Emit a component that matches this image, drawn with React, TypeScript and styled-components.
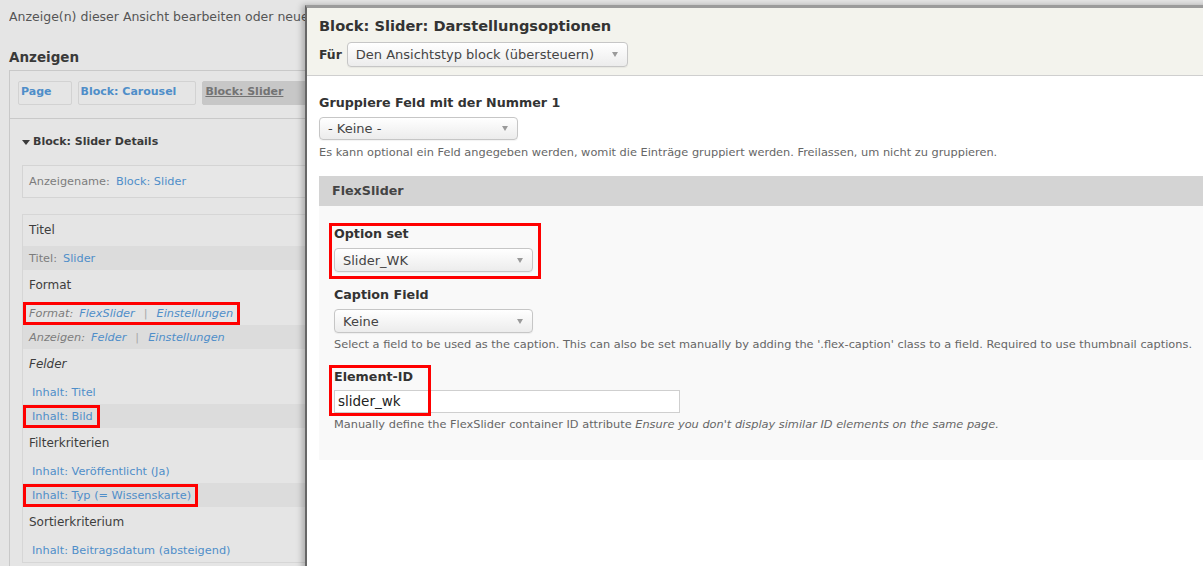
import React from 'react';
import styled, { createGlobalStyle, css } from 'styled-components';

const LINK = '#4f8ec9';

const GlobalStyle = createGlobalStyle`
  html, body {
    margin: 0;
    padding: 0;
  }
  body {
    font-family: "DejaVu Sans", Verdana, sans-serif;
    background: #e5e5e5;
    color: #333;
    overflow: hidden;
  }
`;

const Screen = styled.div`
  position: relative;
  width: 1203px;
  height: 566px;
  overflow: hidden;
  background: #e5e5e5;
`;

/* ---------- page behind the dialog ---------- */

const Page = styled.div`
  padding: 8px 0 0 9px;
`;

const Intro = styled.p`
  margin: 0;
  width: 296px;
  overflow: hidden;
  font-size: 12.5px;
  line-height: 18px;
  color: #555;
  white-space: nowrap;
`;

const SectionTitle = styled.h2`
  margin: 22px 0 4px;
  font-size: 13.5px;
  line-height: 18px;
  font-weight: bold;
  color: #3a3a3a;
`;

const DisplaysBox = styled.div`
  border: 1px solid #c9c9c9;
  border-right: none;
  height: 520px;
`;

const TabBar = styled.div`
  display: flex;
  gap: 6px;
  height: 48px;
  box-sizing: border-box;
  padding: 10px 0 0 8px;
  border-bottom: 1px solid #c9c9c9;
`;

const Tab = styled.span<{ $active?: boolean }>`
  box-sizing: border-box;
  height: 24px;
  padding: 2px 19px 0 2px;
  border: 1px solid #d2d2d2;
  border-radius: 2px;
  font-size: 11px;
  line-height: 16px;
  font-weight: bold;
  color: ${LINK};
  white-space: nowrap;
  ${({ $active }) => $active && css`
    background: #c7c7c7;
    border-color: #c7c7c7;
    color: #737373;
    text-decoration: underline;
    padding-right: 40px;
  `}
`;

const DisplayBody = styled.div`
  padding: 15px 0 0 12px;
`;

const DetailsTitle = styled.div`
  display: flex;
  align-items: center;
  gap: 3px;
  font-size: 11px;
  line-height: 16px;
  font-weight: bold;
  color: #3a3a3a;
`;

const Triangle = styled.span`
  width: 0;
  height: 0;
  border-left: 4.5px solid transparent;
  border-right: 4.5px solid transparent;
  border-top: 5px solid #3a3a3a;
`;

const NameBox = styled.div`
  margin-top: 15px;
  height: 33px;
  box-sizing: border-box;
  border: 1px solid #d4d4d4;
  border-right: none;
  background: #e7e7e7;
  padding: 0 6px;
  font-size: 11.3px;
  line-height: 31px;
`;

const ColumnBox = styled.div`
  margin-top: 16px;
  border: 1px solid #d6d6d6;
  border-right: none;
`;

const HeadRow = styled.div<{ $italic?: boolean }>`
  height: 31px;
  padding-left: 6px;
  font-size: 12px;
  line-height: 31px;
  color: #3d3d3d;
  font-style: ${({ $italic }) => ($italic ? 'italic' : 'normal')};
`;

const ItemRow = styled.div<{ $shade?: boolean; $italic?: boolean }>`
  height: 24px;
  padding-left: 6px;
  display: flex;
  align-items: center;
  font-size: 11.3px;
  background: ${({ $shade }) => ($shade ? '#dcdcdc' : 'transparent')};
  font-style: ${({ $italic }) => ($italic ? 'italic' : 'normal')};
`;

const Label = styled.span`
  color: #7c7c7c;
  margin-right: 6px;
`;

const Link = styled.span<{ $field?: boolean }>`
  color: ${LINK};
  padding-left: ${({ $field }) => ($field ? '3px' : '0')};
`;

const Sep = styled.span`
  color: #a8a8a8;
  margin: 0 9px;
`;

const Mark = styled.span`
  display: inline-flex;
  align-items: center;
  line-height: 15px;
  padding: 1px 4px 1px 3px;
  margin-left: -3px;
  outline: 3px solid #f00;
`;

/* ---------- dialog ---------- */

const Modal = styled.section`
  position: absolute;
  top: 5px;
  left: 305px;
  right: -40px;
  bottom: -10px;
  background: #fff;
  border-top: 3px solid #9b9b9b;
  border-left: 2px solid #676767;
  box-shadow: -3px 0 6px rgba(0, 0, 0, 0.25);
`;

const ModalHeader = styled.header`
  background: #f3f3ed;
  padding: 9px 0 8px 12px;
  border-bottom: 1px solid #cfcfcf;
`;

const ModalTitle = styled.h1`
  margin: 0;
  font-size: 14.6px;
  line-height: 18px;
  font-weight: bold;
  color: #333;
`;

const ForRow = styled.div`
  margin-top: 7px;
  display: flex;
  align-items: center;
  gap: 5px;
`;

const FieldLabel = styled.label`
  display: block;
  font-size: 12.7px;
  line-height: 16px;
  font-weight: bold;
  color: #333;
`;

const InlineLabel = styled(FieldLabel)`
  font-size: 12.4px;
`;

const SelectBox = styled.div<{ $w: number; $h: number }>`
  box-sizing: border-box;
  width: ${({ $w }) => $w}px;
  height: ${({ $h }) => $h}px;
  margin-top: ${({ $h }) => ($h === 25 ? 0 : 6)}px;
  display: flex;
  align-items: center;
  justify-content: space-between;
  padding: 0 9px 0 8px;
  border: 1px solid #c6c6c6;
  border-radius: 4px;
  background: linear-gradient(#ffffff, #ececec);
  box-shadow: 0 1px 1px rgba(0, 0, 0, 0.05);
  font-size: 13px;
  color: #444;
  white-space: nowrap;
`;

const Caret = styled.span`
  width: 0;
  height: 0;
  border-left: 3.5px solid transparent;
  border-right: 3.5px solid transparent;
  border-top: 5px solid #9a9a9a;
`;

const TextInput = styled.div`
  box-sizing: border-box;
  width: 346px;
  height: 23px;
  margin-top: 5px;
  padding-left: 3px;
  border: 1px solid #cfcfcf;
  background: #fff;
  font-size: 13.5px;
  line-height: 21px;
  color: #222;
`;

const Description = styled.div<{ $gap?: number }>`
  margin-top: ${({ $gap }) => $gap ?? 5}px;
  font-size: 11.35px;
  line-height: 14px;
  color: #666;
  white-space: nowrap;
`;

const ModalBody = styled.div`
  padding: 19px 0 0 12px;
`;

const Fieldset = styled.div`
  margin-top: 17px;
`;

const Legend = styled.div`
  height: 30px;
  padding-left: 13px;
  background: #d4d4d4;
  font-size: 12.7px;
  line-height: 30px;
  font-weight: bold;
  color: #444;
`;

const FieldsetBody = styled.div`
  background: #f9f9f9;
  padding: 20px 0 29px 15px;
`;

const FormItem = styled.div<{ $gap?: number }>`
  position: relative;
  margin-top: ${({ $gap }) => $gap ?? 0}px;
`;

const RedFrame = styled.span<{ $top: number; $left: number; $w: number; $h: number }>`
  position: absolute;
  top: ${({ $top }) => $top}px;
  left: ${({ $left }) => $left}px;
  width: ${({ $w }) => $w}px;
  height: ${({ $h }) => $h}px;
  box-sizing: border-box;
  border: 3px solid #f00;
  pointer-events: none;
`;

function Select({ value, w, h }: { value: string; w: number; h: number }) {
  return (
    <SelectBox $w={ w } $h={ h }>
      { value }
      <Caret />
    </SelectBox>
  );
}

export default function App() {
  return (
    <Screen>
      <GlobalStyle />
      <Page>
        <Intro>Anzeige(n) dieser Ansicht bearbeiten oder neue hinzufügen.</Intro>
        <SectionTitle>Anzeigen</SectionTitle>
        <DisplaysBox>
          <TabBar>
            <Tab>Page</Tab>
            <Tab>Block: Carousel</Tab>
            <Tab $active>Block: Slider</Tab>
          </TabBar>
          <DisplayBody>
            <DetailsTitle><Triangle />Block: Slider Details</DetailsTitle>
            <NameBox>
              <Label>Anzeigename:</Label>
              <Link>Block: Slider</Link>
            </NameBox>
            <ColumnBox>
              <HeadRow>Titel</HeadRow>
              <ItemRow $shade>
                <Label>Titel:</Label>
                <Link>Slider</Link>
              </ItemRow>
              <HeadRow>Format</HeadRow>
              <ItemRow $italic>
                <Mark>
                  <Label>Format:</Label>
                  <Link>FlexSlider</Link>
                  <Sep>|</Sep>
                  <Link>Einstellungen</Link>
                </Mark>
              </ItemRow>
              <ItemRow $shade $italic>
                <Label>Anzeigen:</Label>
                <Link>Felder</Link>
                <Sep>|</Sep>
                <Link>Einstellungen</Link>
              </ItemRow>
              <HeadRow $italic>Felder</HeadRow>
              <ItemRow><Link $field>Inhalt: Titel</Link></ItemRow>
              <ItemRow $shade>
                <Mark><Link $field>Inhalt: Bild</Link></Mark>
              </ItemRow>
              <HeadRow>Filterkriterien</HeadRow>
              <ItemRow><Link $field>Inhalt: Veröffentlicht (Ja)</Link></ItemRow>
              <ItemRow $shade>
                <Mark><Link $field>Inhalt: Typ (= Wissenskarte)</Link></Mark>
              </ItemRow>
              <HeadRow>Sortierkriterium</HeadRow>
              <ItemRow><Link $field>Inhalt: Beitragsdatum (absteigend)</Link></ItemRow>
            </ColumnBox>
          </DisplayBody>
        </DisplaysBox>
      </Page>

      <Modal>
        <ModalHeader>
          <ModalTitle>Block: Slider: Darstellungsoptionen</ModalTitle>
          <ForRow>
            <InlineLabel>Für</InlineLabel>
            <Select value="Den Ansichtstyp block (übersteuern)" w={ 281 } h={ 25 } />
          </ForRow>
        </ModalHeader>
        <ModalBody>
          <FieldLabel>Gruppiere Feld mit der Nummer 1</FieldLabel>
          <Select value="- Keine -" w={ 199 } h={ 23 } />
          <Description>
            Es kann optional ein Feld angegeben werden, womit die Einträge gruppiert werden. Freilassen, um nicht zu gruppieren.
          </Description>
          <Fieldset>
            <Legend>FlexSlider</Legend>
            <FieldsetBody>
              <FormItem>
                <FieldLabel>Option set</FieldLabel>
                <Select value="Slider_WK" w={ 199 } h={ 24 } />
                <RedFrame $top={ -3 } $left={ -5 } $w={ 212 } $h={ 56 } />
              </FormItem>
              <FormItem $gap={ 15 }>
                <FieldLabel>Caption Field</FieldLabel>
                <Select value="Keine" w={ 199 } h={ 24 } />
                <Description $gap={ 4 }>
                  Select a field to be used as the caption. This can also be set manually by adding the '.flex-caption' class to a field. Required to use thumbnail captions.
                </Description>
              </FormItem>
              <FormItem $gap={ 18 }>
                <FieldLabel>Element-ID</FieldLabel>
                <TextInput>slider_wk</TextInput>
                <Description $gap={ 4 }>
                  Manually define the FlexSlider container ID attribute <em>Ensure you don't display similar ID elements on the same page.</em>
                </Description>
                <RedFrame $top={ -4 } $left={ -5 } $w={ 102 } $h={ 51 } />
              </FormItem>
            </FieldsetBody>
          </Fieldset>
        </ModalBody>
      </Modal>
    </Screen>
  );
}
